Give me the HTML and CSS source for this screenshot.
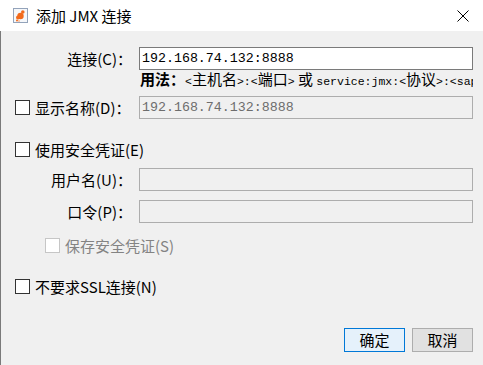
FILE: index.html
```html
<!DOCTYPE html>
<html lang="zh-CN">
<head>
  <meta charset="UTF-8" />
  <title>添加 JMX 连接</title>
  <link rel="stylesheet" href="styles.css">
</head>
<body>
  <div class="dialog">
    <!-- Title bar -->
    <div class="titlebar">
      <svg class="app-icon" viewBox="0 0 15 15">
        <rect x="0.5" y="0.5" width="14" height="14" fill="#f5f7fa" stroke="#93a3ba"/>
        <circle cx="7.5" cy="8" r="3.2" fill="#f26a1b"/>
        <circle cx="5" cy="9.5" r="2" fill="#f26a1b"/>
        <circle cx="9.8" cy="4" r="1.8" fill="#f26a1b"/>
        <circle cx="4" cy="12.6" r="1" fill="#f26a1b"/>
        <circle cx="6" cy="13" r="0.8" fill="#f7935a"/>
      </svg>
      <span class="title">添加 JMX 连接</span>
      <svg class="close" viewBox="0 0 12 12">
        <path d="M0.5 0.5 L11.5 11.5 M11.5 0.5 L0.5 11.5" stroke="#000" stroke-width="1"/>
      </svg>
    </div>

    <!-- Form -->
    <div class="content">
      <div class="row">
        <label class="label">连接(C)：</label>
        <input class="field" type="text" value="192.168.74.132:8888">
      </div>
      <div class="row usage">
        <span></span>
        <div class="hint"><b>用法：</b><span class="m">&lt;</span>主机名<span class="m">&gt;:&lt;</span>端口<span class="m">&gt;</span> 或 <span class="m">service:jmx:&lt;</span>协议<span class="m">&gt;:&lt;sap&gt;</span></div>
      </div>
      <div class="row gap-6">
        <label class="check-label"><span class="box"></span>显示名称(D)：</label>
        <input class="field off" type="text" value="192.168.74.132:8888" disabled>
      </div>
      <div class="check-row gap-19">
        <span class="box"></span>使用安全凭证(E)
      </div>
      <div class="row gap-7">
        <label class="label">用户名(U)：</label>
        <input class="field off" type="text" disabled>
      </div>
      <div class="row gap-9">
        <label class="label">口令(P)：</label>
        <input class="field off" type="password" disabled>
      </div>
      <div class="check-row gap-11 indent disabled">
        <span class="box"></span>保存安全凭证(S)
      </div>
      <div class="check-row gap-18">
        <span class="box"></span>不要求SSL连接(N)
      </div>

      <div class="buttons">
        <button class="btn default">确定</button>
        <button class="btn">取消</button>
      </div>
    </div>
  </div>
</body>
</html>
```

FILE: styles.css
```css
* {
  box-sizing: border-box;
}

html, body {
  margin: 0;
  padding: 0;
}

body {
  font-family: "Noto Sans CJK SC", sans-serif;
  font-size: 15px;
  color: #000;
  background-color: #f0f0f0;
}

.dialog {
  width: 483px;
  height: 365px;
  overflow: hidden;
}

.titlebar {
  height: 31px;
  background-color: #fff;
  display: flex;
  align-items: center;
  padding: 0 14px 0 13px;
}

.app-icon {
  display: block;
  width: 15px;
  height: 15px;
}

.title {
  margin-left: 8px;
  font-size: 15px;
  line-height: 31px;
}

.close {
  display: block;
  margin-left: auto;
  width: 12px;
  height: 12px;
}

.content {
  height: 334px;
  border-left: 1px solid #7a7a7a;
  padding: 16px 10px 0 14px;
}

.row {
  display: grid;
  grid-template-columns: 117px 334px;
  column-gap: 7px;
  height: 23px;
  align-items: center;
  line-height: 23px;
}

.label {
  text-align: right;
  white-space: nowrap;
}

.check-label, .check-row {
  display: flex;
  align-items: center;
  white-space: nowrap;
  line-height: 23px;
}

.check-row {
  height: 23px;
}

.box {
  flex: none;
  width: 15px;
  height: 15px;
  border: 1px solid #333;
  background-color: #fff;
  margin-right: 5px;
}

.indent {
  padding-left: 30px;
}

.disabled {
  color: #838383;
}

.disabled .box {
  border-color: #c6c6c6;
}

.field {
  width: 334px;
  height: 23px;
  margin: 0;
  padding: 0 2px;
  font-family: "Liberation Mono", monospace;
  font-size: 13.3px;
  color: #000;
  background-color: #fff;
  border: 1px solid #7a7a7a;
  border-radius: 0;
  outline: none;
}

.field.off {
  color: #6d6d6d;
  background-color: #f0f0f0;
  border-color: #adadad;
}

.usage {
  height: 20px;
  line-height: 20px;
}

.hint {
  font-size: 15px;
  line-height: 20px;
  white-space: nowrap;
  overflow: hidden;
  padding-left: 1px;
}

.hint .m {
  font-family: "Liberation Mono", monospace;
  font-size: 11.5px;
}

.gap-6 { margin-top: 6px; }
.gap-7 { margin-top: 7px; }
.gap-9 { margin-top: 9px; }
.gap-11 { margin-top: 11px; }
.gap-18 { margin-top: 18px; }
.gap-19 { margin-top: 19px; }

.buttons {
  display: flex;
  justify-content: flex-end;
  gap: 7px;
  margin-top: 30px;
}

.btn {
  width: 61px;
  height: 24px;
  padding: 0;
  font-family: "Noto Sans CJK SC", sans-serif;
  font-size: 15px;
  line-height: 22px;
  color: #000;
  background-color: #e1e1e1;
  border: 1px solid #adadad;
  border-radius: 0;
}

.btn.default {
  background-color: #e5f1fb;
  border-color: #0078d7;
}
```
